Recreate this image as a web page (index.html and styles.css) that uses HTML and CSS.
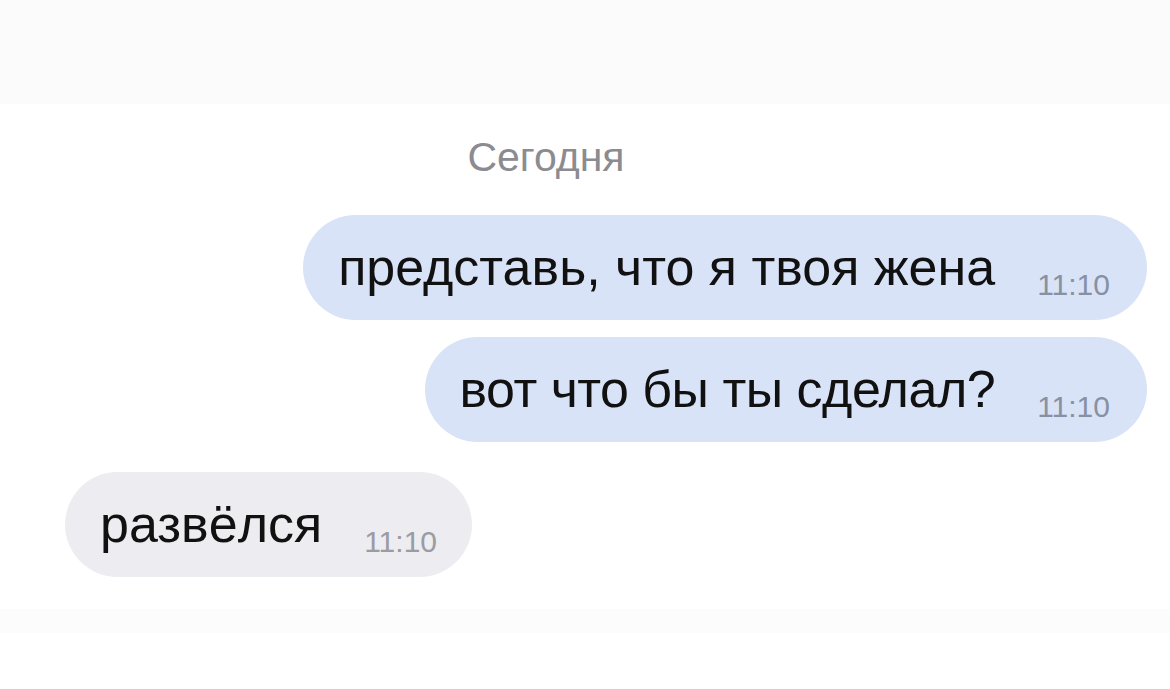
FILE: index.html
```html
<!DOCTYPE html>
<html lang="ru">
<head>
    <meta charset="UTF-8">
    <meta name="viewport" content="width=device-width, initial-scale=1.0">
    <title>Сообщения</title>
    <link rel="stylesheet" href="styles.css">
</head>
<body>
    <div class="top-bar"></div>

    <div class="chat">
        <div class="day">Сегодня</div>

        <div class="msg out">
            <span class="text">представь, что я твоя жена</span>
            <span class="time">11:10</span>
        </div>
        <div class="msg out">
            <span class="text">вот что бы ты сделал?</span>
            <span class="time">11:10</span>
        </div>
        <div class="msg in">
            <span class="text">развёлся</span>
            <span class="time">11:10</span>
        </div>
    </div>

    <div class="bottom-bar"></div>
</body>
</html>
```

FILE: styles.css
```css
body {
    margin: 0;
    background: #fff;
    font-family: "Liberation Sans", Arial, sans-serif;
    color: #111;
}
.top-bar {
    height: 104px;
    background-color: #fbfbfb;
}
.chat {
    display: flex;
    flex-direction: column;
    padding: 30px 23px 0 65px;
}
.day {
    width: 962px;
    text-align: center;
    font-size: 41px;
    line-height: 46px;
    color: #8b8b90;
    margin-bottom: 35px;
}
.msg {
    display: flex;
    align-items: flex-end;
    height: 105px;
    box-sizing: border-box;
    padding: 24px 37px 24px 35px;
    border-radius: 53px;
}
.msg .text {
    font-size: 52px;
    line-height: 57px;
    white-space: nowrap;
}
.msg .time {
    font-size: 30px;
    line-height: 22px;
    margin-left: 42px;
    color: #8791a3;
}
.out {
    align-self: flex-end;
    background-color: #d9e3f7;
    margin-bottom: 17px;
}
.out + .out .text {
    letter-spacing: -0.5px;
}
.in {
    align-self: flex-start;
    background-color: #ececf1;
    margin-top: 13px;
    padding-right: 35px;
}
.in .time {
    color: #9b9ba2;
}
.bottom-bar {
    height: 24px;
    margin-top: 32px;
    background-color: #fcfcfc;
}
```
